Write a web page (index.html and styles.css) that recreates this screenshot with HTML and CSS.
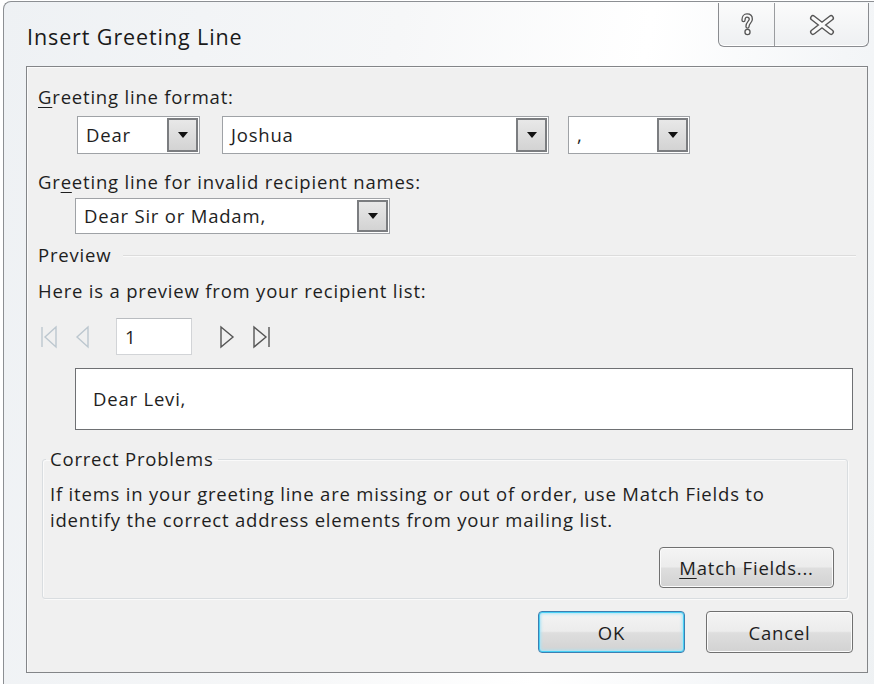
FILE: index.html
```html
<!DOCTYPE html>
<html lang="en">
<head>
<meta charset="utf-8">
<title>Insert Greeting Line</title>
<link rel="stylesheet" href="styles.css">
</head>
<body>
<div class="frame">
  <div class="titlebar">
    <span class="title">Insert Greeting Line</span>
    <div class="caption-buttons">
      <span class="cap-btn cap-help">
        <svg width="20" height="26" viewBox="0 0 20 26">
          <g fill="none" stroke-linecap="round" stroke-linejoin="round">
            <path d="M6.5 8 C6.5 5 8 3.5 10 3.5 C12.5 3.5 13.8 5 13.8 7.2 C13.8 10 10.5 10.5 10.5 14.5" stroke="#555" stroke-width="4.4"/>
            <circle cx="10.5" cy="20" r="1" stroke="#555" stroke-width="4.4"/>
            <path d="M6.5 8 C6.5 5 8 3.5 10 3.5 C12.5 3.5 13.8 5 13.8 7.2 C13.8 10 10.5 10.5 10.5 14.5" stroke="#fafafa" stroke-width="1.8"/>
            <circle cx="10.5" cy="20" r="1" stroke="#fafafa" stroke-width="1.8"/>
          </g>
        </svg>
      </span>
      <span class="cap-btn cap-close">
        <svg width="28" height="22" viewBox="0 0 28 22">
          <g fill="none" stroke-linecap="round">
            <path d="M5 4 L23 18 M23 4 L5 18" stroke="#555" stroke-width="6"/>
            <path d="M5 4 L23 18 M23 4 L5 18" stroke="#fafafa" stroke-width="3.2"/>
          </g>
        </svg>
      </span>
    </div>
  </div>

  <div class="client">
    <div class="label label-format"><u>G</u>reeting line format:</div>
    <div class="combo-row">
      <div class="combo combo-salutation"><span class="combo-text">Dear</span><span class="drop"><i class="arrow"></i></span></div>
      <div class="combo combo-name"><span class="combo-text">Joshua</span><span class="drop"><i class="arrow"></i></span></div>
      <div class="combo combo-punct"><span class="combo-text">,</span><span class="drop"><i class="arrow"></i></span></div>
    </div>

    <div class="label label-invalid">Gr<u>e</u>eting line for invalid recipient names:</div>
    <div class="combo combo-invalid"><span class="combo-text">Dear Sir or Madam,</span><span class="drop"><i class="arrow"></i></span></div>

    <div class="section-head">
      <span class="label">Preview</span>
      <span class="rule"></span>
    </div>
    <div class="label label-here">Here is a preview from your recipient list:</div>

    <div class="nav-row">
      <span class="nav-icon disabled">
        <svg width="22" height="28" viewBox="0 0 22 28"><g fill="none" stroke="#bcc7cf" stroke-width="1.4"><path d="M3 4 V24"/><path d="M17 4 L6 14 L17 24 Z"/></g></svg>
      </span>
      <span class="nav-icon disabled">
        <svg width="22" height="28" viewBox="0 0 22 28"><g fill="none" stroke="#bcc7cf" stroke-width="1.4"><path d="M15 4 L4 14 L15 24 Z"/></g></svg>
      </span>
      <span class="record-box">1</span>
      <span class="nav-icon">
        <svg width="22" height="28" viewBox="0 0 22 28"><g fill="none" stroke="#555" stroke-width="1.4"><path d="M4 4 L16 14 L4 24 Z"/></g></svg>
      </span>
      <span class="nav-icon">
        <svg width="22" height="28" viewBox="0 0 22 28"><g fill="none" stroke="#555" stroke-width="1.4"><path d="M3 4 L15 14 L3 24 Z"/><path d="M18 4 V24"/></g></svg>
      </span>
    </div>

    <div class="preview-box">Dear Levi,</div>

    <fieldset class="group">
      <legend>Correct Problems</legend>
      <p class="group-text">If items in your greeting line are missing or out of order, use Match Fields to identify the correct address elements from your mailing list.</p>
      <div class="group-actions">
        <button class="btn btn-match" type="button"><u>M</u>atch Fields...</button>
      </div>
    </fieldset>

    <div class="dialog-actions">
      <button class="btn btn-ok" type="button">OK</button>
      <button class="btn" type="button">Cancel</button>
    </div>
  </div>
</div>
</body>
</html>
```

FILE: styles.css
```css
html, body {
  margin: 0;
  padding: 0;
  background: #ffffff;
}

body {
  width: 874px;
  height: 684px;
  overflow: hidden;
  font-family: "Open Sans", "Noto Sans", sans-serif;
  font-size: 18.5px;
  letter-spacing: 0.8px;
  color: #1e1e1e;
}

/* Window frame */
.frame {
  margin: 1px 0 0 3px;
  width: 880px;
  height: 690px;
  border-left: 1px solid #8c8f93;
  border-top: 1px solid #8c8f93;
  border-top-left-radius: 8px;
  background:
    linear-gradient(100deg, #eef1f4 0%, #f6f7f8 40%, #ffffff 65%, #f4f6f8 85%, #eef1f3 100%);
  box-sizing: border-box;
}

.titlebar {
  height: 64px;
  display: flex;
  align-items: flex-start;
  justify-content: space-between;
}

.title {
  margin: 21px 0 0 23px;
  font-size: 21.5px;
  letter-spacing: 0.9px;
  line-height: 28px;
  color: #1a1a1a;
}

.caption-buttons {
  display: flex;
  margin-right: 14px;
  margin-top: 1px;
  border: 1px solid #8a8c90;
  border-top: none;
  border-radius: 0 0 6px 6px;
  background: linear-gradient(#fbfbfb, #eef0f2);
  box-shadow: inset 0 -1px 0 #ffffff;
}

.cap-btn {
  height: 43px;
  display: flex;
  align-items: center;
  justify-content: center;
}

.cap-help {
  width: 55px;
  border-right: 1px solid #9a9c9f;
}

.cap-close {
  width: 93px;
}

/* Client area */
.client {
  margin-left: 22px;
  width: 842px;
  height: 607px;
  box-sizing: border-box;
  border: 1px solid #838588;
  box-shadow: inset 1px 1px 0 #fbfbfb;
  background: #f0f0f0;
  display: flex;
  flex-direction: column;
  align-items: flex-start;
}

.label {
  line-height: 24px;
  white-space: nowrap;
}

.label u, .btn u {
  text-decoration-thickness: 1px;
  text-underline-offset: 3px;
}

.label-format {
  margin: 18px 0 0 11px;
}

.combo-row {
  display: flex;
  margin: 7px 0 0 50px;
}

.combo {
  height: 38px;
  box-sizing: border-box;
  display: flex;
  align-items: center;
  background: #ffffff;
  border: 1px solid #9fa2a6;
}

.combo-text {
  flex: 1;
  padding-left: 8px;
  line-height: 24px;
  white-space: nowrap;
}

.drop {
  width: 31px;
  align-self: stretch;
  margin: 1px 1px 1px 0;
  box-sizing: border-box;
  border: 2px solid #7b7d80;
  background: linear-gradient(#e8e8e8, #d3d3d3);
  display: flex;
  align-items: center;
  justify-content: center;
}

.arrow {
  width: 0;
  height: 0;
  border-left: 5px solid transparent;
  border-right: 5px solid transparent;
  border-top: 6px solid #111111;
}

.combo-salutation { width: 123px; }
.combo-name { width: 327px; margin-left: 22px; }
.combo-punct { width: 122px; margin-left: 19px; }

.label-invalid {
  margin: 16px 0 0 11px;
}

.combo-invalid {
  width: 315px;
  height: 36px;
  margin: 4px 0 0 48px;
}

.section-head {
  align-self: stretch;
  display: flex;
  align-items: center;
  margin: 9px 11px 0 11px;
  gap: 12px;
}

.section-head .rule {
  flex: 1;
  height: 1px;
  background: #dcdcdc;
  box-shadow: 0 1px 0 #fafafa;
}

.label-here {
  margin: 12px 0 0 11px;
}

.nav-row {
  display: flex;
  align-items: center;
  margin: 15px 0 0 12px;
  height: 37px;
}

.nav-icon {
  display: flex;
  width: 22px;
  height: 28px;
}

.nav-icon + .nav-icon {
  margin-left: 12px;
}

.record-box {
  margin: 0 25px 0 21px;
  width: 76px;
  height: 37px;
  box-sizing: border-box;
  border: 1px solid #d2d4d7;
  border-top-color: #b9bcc0;
  background: #ffffff;
  padding-left: 8px;
  line-height: 35px;
}

.preview-box {
  margin: 13px 0 0 48px;
  width: 778px;
  height: 62px;
  box-sizing: border-box;
  border: 1px solid #6e7073;
  background: #ffffff;
  padding-left: 17px;
  line-height: 60px;
}

/* Correct Problems group box */
.group {
  margin: 17px 0 0 15px;
  width: 806px;
  box-sizing: border-box;
  padding: 0 13px 10px 7px;
  border: 1px solid #d9dde0;
  border-radius: 3px;
  box-shadow: inset 1px 1px 0 #fafafa, 1px 1px 0 #fafafa;
  min-inline-size: 0;
}

.group legend {
  padding: 0 4px;
  margin-left: -4px;
  line-height: 24px;
}

.group-text {
  margin: 10px 0 0 0;
  max-width: 770px;
  line-height: 26px;
}

.group-actions {
  display: flex;
  justify-content: flex-end;
  margin-top: 14px;
}

.btn {
  font-family: inherit;
  font-size: 18.5px;
  letter-spacing: 0.8px;
  color: #1e1e1e;
  height: 42px;
  width: 147px;
  padding: 0;
  box-sizing: border-box;
  border: 1px solid #707070;
  border-radius: 4px;
  background: linear-gradient(#f4f4f4 0%, #ececec 48%, #dedede 52%, #d2d2d2 100%);
  box-shadow: inset 0 0 0 1px #fbfbfb;
}

.btn-match {
  width: 175px;
  height: 41px;
}

.dialog-actions {
  align-self: flex-end;
  display: flex;
  gap: 21px;
  margin: 12px 14px 0 0;
}

.btn-ok {
  border-color: #3c7fb1;
  box-shadow: inset 0 0 0 1px #48d0f5, inset 0 0 3px 2px #a9e4f7;
}
```
